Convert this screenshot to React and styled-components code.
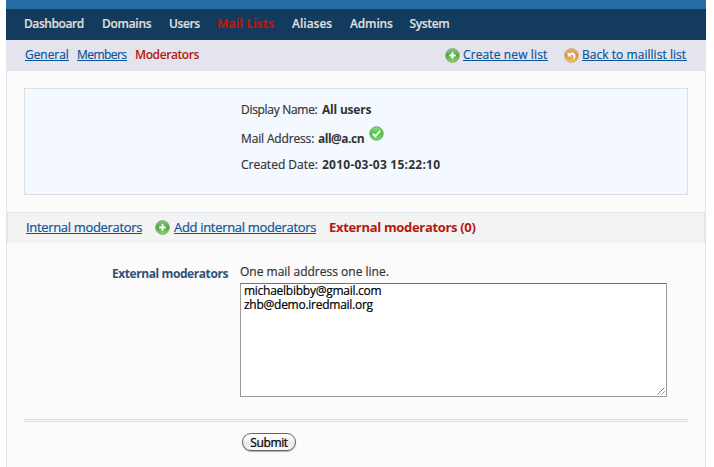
import React from "react";
import styled, { createGlobalStyle } from "styled-components";

const GlobalStyle = createGlobalStyle`
  *, *::before, *::after { box-sizing: border-box; }
  body {
    margin: 0;
    background: #fff;
    font: 500 12px/18px "Open Sans", "Noto Sans", sans-serif;
    color: #333;
    -webkit-text-stroke: 0.2px currentColor;
    overflow: hidden;
  }
`;

const Page = styled.div`
  width: 700px;
  height: 467px;
  margin-left: 6px;
  display: flex;
  flex-direction: column;
`;

const TopStrip = styled.div`
  height: 9px;
  flex: none;
  background: #286ca4;
`;

const NavBar = styled.nav`
  height: 31px;
  flex: none;
  display: flex;
  gap: 18px;
  padding: 6px 0 0 18px;
  background: #123b5d;
`;

const NavItem = styled.a`
  width: ${(p) => p.$w}px;
  white-space: nowrap;
  font-weight: ${(p) => (p.$active ? 700 : 600)};
  letter-spacing: ${(p) => p.$ls || 0}px;
  color: ${(p) => (p.$active ? "#b5190f" : "#dedede")};
`;

const SubBar = styled.div`
  height: 31px;
  flex: none;
  display: flex;
  justify-content: space-between;
  padding: 6px 19px 0 19px;
  background: #e3e4ed;
`;

const LinkGroup = styled.div`
  display: flex;
  gap: ${(p) => p.$gap}px;
`;

const ActionLink = styled.span`
  display: flex;
  gap: ${(p) => p.$gap || 3}px;
`;

const Link = styled.a`
  width: ${(p) => p.$w}px;
  height: 15px;
  white-space: nowrap;
  letter-spacing: ${(p) => p.$ls || 0}px;
  color: #0b559b;
  border-bottom: 1px solid #0b559b;
`;

const Current = styled.span`
  width: ${(p) => p.$w}px;
  white-space: nowrap;
  font-weight: ${(p) => p.$weight || 700};
  letter-spacing: ${(p) => p.$ls || 0}px;
  color: #b5190f;
  -webkit-text-stroke: 0;
`;

const Content = styled.main`
  flex: 1;
  background: #fbfbfb;
  border: solid #e0e5ee;
  border-width: 0 1px;
  padding-top: 17px;
`;

const InfoPanel = styled.section`
  height: 107px;
  margin: 0 17px;
  padding: 12px 0 0 216px;
  background: #f3f9fe;
  border: 1px solid #d9dfe4;
`;

const InfoRow = styled.div`
  height: ${(p) => p.$h}px;
  display: flex;
  gap: 4px;
`;

const InfoLabel = styled.span`
  width: ${(p) => p.$w}px;
  white-space: nowrap;
  letter-spacing: ${(p) => p.$ls || 0}px;
`;

const InfoValue = styled.strong`
  width: ${(p) => p.$w}px;
  white-space: nowrap;
  font-weight: 700;
  letter-spacing: ${(p) => p.$ls || 0}px;
  -webkit-text-stroke: 0;
`;

const TabBar = styled.div`
  height: 31px;
  margin-top: 17px;
  display: flex;
  padding: 5px 0 0 18px;
  font-size: 13px;
  background: #f3f3f3;
  border: solid #dfe5ef;
  border-width: 1px 1px 0;
`;

const TabLinks = styled(LinkGroup)`
  gap: 13px;

  ${Link} {
    height: 16px;
  }
`;

const FormRow = styled.div`
  display: flex;
  gap: 12px;
  padding-top: 20px;
`;

const FieldLabel = styled.label`
  width: 221px;
  padding: 2px 0 0 105px;
  white-space: nowrap;
  font-weight: 700;
  letter-spacing: ${(p) => p.$ls || 0}px;
  color: #2e5174;
  -webkit-text-stroke: 0;
`;

const Hint = styled.div`
  height: 20px;
  white-space: nowrap;
  letter-spacing: ${(p) => p.$ls || 0}px;
`;

const AddressBox = styled.div`
  position: relative;
  width: 427px;
  height: 114px;
`;

const AddressInput = styled.textarea`
  display: block;
  width: 100%;
  height: 100%;
  margin: 0;
  padding: 0 3px;
  resize: none;
  outline: none;
  font: 500 12px/14px "Open Sans", "Noto Sans", sans-serif;
  letter-spacing: -0.26px;
  color: #000;
  background: #fff;
  border: 1px solid #999;
  border-top-color: #727272;
  border-radius: 0;
`;

const Grip = styled.svg`
  position: absolute;
  right: 2px;
  bottom: 2px;
`;

const Divider = styled.div`
  height: 3px;
  margin: 22px 17px 0;
  border: solid #d9dee3;
  border-width: 1px 0;
  background: #fbfbfb;
`;

const SubmitButton = styled.button`
  display: block;
  width: 54px;
  height: 18px;
  margin: 11px 0 0 235px;
  padding: 0;
  font: 500 12px/15px "Open Sans", "Noto Sans", sans-serif;
  letter-spacing: -0.35px;
  color: #000;
  border: 1px solid #626262;
  border-radius: 9px;
  background: linear-gradient(#fff 0%, #f3f3f3 48%, #e6e6e6 52%, #fafafa 100%);
  box-shadow: 0 1px 1px rgba(0, 0, 0, 0.3);
`;

const Icon = styled.svg`
  flex: none;
  margin-top: ${(p) => p.$top || 0}px;
`;

function AddIcon({ top }) {
  return (
    <Icon width="15" height="15" viewBox="0 0 15 15" $top={top}>
      <defs>
        <linearGradient id="add" x2="0" y2="1">
          <stop offset="0" stopColor="#8fca86" />
          <stop offset=".5" stopColor="#4ca83c" />
          <stop offset="1" stopColor="#9ada58" />
        </linearGradient>
      </defs>
      <circle cx="7.5" cy="7.5" r="6.9" fill="url(#add)" stroke="#84a680" strokeWidth=".9" />
      <path d="M7.5 4.2v6.6M4.2 7.5h6.6" stroke="#fff" strokeWidth="2" />
    </Icon>
  );
}

function BackIcon({ top }) {
  return (
    <Icon width="15" height="15" viewBox="0 0 15 15" $top={top}>
      <defs>
        <linearGradient id="back" x2="0" y2="1">
          <stop offset="0" stopColor="#e3b679" />
          <stop offset=".5" stopColor="#da9134" />
          <stop offset="1" stopColor="#f3cd58" />
        </linearGradient>
      </defs>
      <circle cx="7.5" cy="7.5" r="6.9" fill="url(#back)" stroke="#c9ad83" strokeWidth=".9" />
      <path d="M3.6 4v4.6h4.6L6.7 7.1c1.6-.8 2.9.1 2.9 1.8 0 1.2-.6 2.2-1.7 3.1 2.3-.6 3.6-2.1 3.6-4.1 0-3-3.2-4.4-6.3-2.4Z" fill="#fff" />
    </Icon>
  );
}

function CheckIcon({ top }) {
  return (
    <Icon width="15" height="15" viewBox="0 0 15 15" $top={top}>
      <defs>
        <linearGradient id="check" x2="0" y2="1">
          <stop offset="0" stopColor="#8fe086" />
          <stop offset=".5" stopColor="#4cc440" />
          <stop offset="1" stopColor="#83e565" />
        </linearGradient>
      </defs>
      <circle cx="7.5" cy="7.5" r="6.7" fill="url(#check)" stroke="#62a75b" />
      <path d="m4 7.7 2.4 2.4 4.7-5" fill="none" stroke="#fff" strokeWidth="2.1" />
    </Icon>
  );
}

const NAV = [
  { label: "Dashboard", w: 60, ls: -0.42 },
  { label: "Domains", w: 49, ls: -0.3 },
  { label: "Users", w: 30, ls: -0.4 },
  { label: "Mail Lists", w: 57, ls: 0.05, active: true },
  { label: "Aliases", w: 40, ls: 0 },
  { label: "Admins", w: 41.5, ls: -0.15 },
  { label: "System", w: 40, ls: -0.35 },
];

const ADDRESSES = "michaelbibby@gmail.com\nzhb@demo.iredmail.org";

export default function App() {
  return (
    <>
      <GlobalStyle />
      <Page>
        <TopStrip />
        <NavBar>
          {NAV.map((n) => (
            <NavItem key={n.label} $w={n.w} $ls={n.ls} $active={n.active}>{n.label}</NavItem>
          ))}
        </NavBar>
        <SubBar>
          <LinkGroup $gap={8}>
            <Link $w={44} $ls={-0.05}>General</Link>
            <Link $w={50} $ls={-0.55}>Members</Link>
            <Current $w={63} $ls={-0.4} $weight={600}>Moderators</Current>
          </LinkGroup>
          <LinkGroup $gap={16}>
            <ActionLink><AddIcon top={2} /><Link $w={85} $ls={0.12}>Create new list</Link></ActionLink>
            <ActionLink><BackIcon top={2} /><Link $w={105} $ls={0.04}>Back to maillist list</Link></ActionLink>
          </LinkGroup>
        </SubBar>
        <Content>
          <InfoPanel>
            <InfoRow $h={29}>
              <InfoLabel $w={77} $ls={-0.3}>Display Name:</InfoLabel>
              <InfoValue $w={50} $ls={-0.2}>All users</InfoValue>
            </InfoRow>
            <InfoRow $h={26}>
              <InfoLabel $w={73} $ls={-0.15}>Mail Address:</InfoLabel>
              <InfoValue $w={47} $ls={-0.5}>all@a.cn</InfoValue>
              <CheckIcon top={-4} />
            </InfoRow>
            <InfoRow $h={26}>
              <InfoLabel $w={77}>Created Date:</InfoLabel>
              <InfoValue $w={118} $ls={0.24}>2010-03-03 15:22:10</InfoValue>
            </InfoRow>
          </InfoPanel>
          <TabBar>
            <TabLinks>
              <Link $w={116} $ls={-0.33}>Internal moderators</Link>
              <ActionLink $gap={4}><AddIcon top={2} /><Link $w={142} $ls={-0.32}>Add internal moderators</Link></ActionLink>
              <Current $w={147} $ls={-0.32}>External moderators (0)</Current>
            </TabLinks>
          </TabBar>
          <FormRow>
            <FieldLabel $ls={-0.42}>External moderators</FieldLabel>
            <div>
              <Hint>One mail address one line.</Hint>
              <AddressBox>
                <AddressInput defaultValue={ADDRESSES} spellCheck={false} />
                <Grip width="8" height="8" viewBox="0 0 8 8">
                  <path d="M.5 7.5l7-7M4.5 7.5l3-3" stroke="#555" strokeWidth="1" strokeDasharray="1.2 .4" />
                </Grip>
              </AddressBox>
            </div>
          </FormRow>
          <Divider />
          <SubmitButton>Submit</SubmitButton>
        </Content>
      </Page>
    </>
  );
}
